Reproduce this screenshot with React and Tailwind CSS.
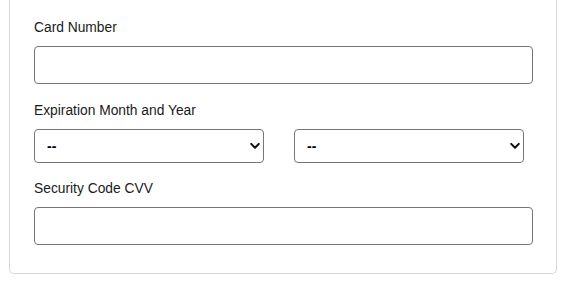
import React from "react";

function Chevron() {
  return (
    <svg
      className="pointer-events-none absolute right-[4px] top-1/2 -translate-y-1/2"
      width="10"
      height="7"
      viewBox="0 0 10 7"
      fill="none"
    >
      <path d="M1.2 1.4 L5 5.2 L8.8 1.4" stroke="#111" strokeWidth="2" strokeLinecap="round" strokeLinejoin="round" />
    </svg>
  );
}

function Select() {
  return (
    <div className="relative w-[230px]">
      <select className="block h-[34px] w-full appearance-none rounded-[4px] border border-[#767676] bg-white pl-[12px] text-[14px] font-semibold text-black outline-none">
        <option>--</option>
      </select>
      <Chevron />
    </div>
  );
}

export default function App() {
  return (
    <div
      className="min-h-[294px] w-[578px] bg-white"
      style={{ fontFamily: '"Liberation Sans", Arial, Helvetica, sans-serif' }}
    >
      <div className="ml-[9px] w-[548px] rounded-b-[5px] border-x border-b border-[#d6d6d6] pl-[24px] pr-[23px] pt-[20px] pb-[28px]">
        <label className="block text-[13.8px] leading-[16px] text-[#1a1a1a]">Card Number</label>
        <input className="mt-[10px] block h-[38px] w-full rounded-[4px] border border-[#767676] bg-white outline-none" />

        <label className="mt-[19px] block text-[13.8px] leading-[16px] text-[#1a1a1a]">
          Expiration Month and Year
        </label>
        <div className="mt-[10px] flex gap-[30px]">
          <Select />
          <Select />
        </div>

        <label className="mt-[18px] block text-[13.8px] leading-[16px] text-[#1a1a1a]">Security Code CVV</label>
        <input className="mt-[10px] block h-[38px] w-full rounded-[4px] border border-[#767676] bg-white outline-none" />
      </div>
    </div>
  );
}
